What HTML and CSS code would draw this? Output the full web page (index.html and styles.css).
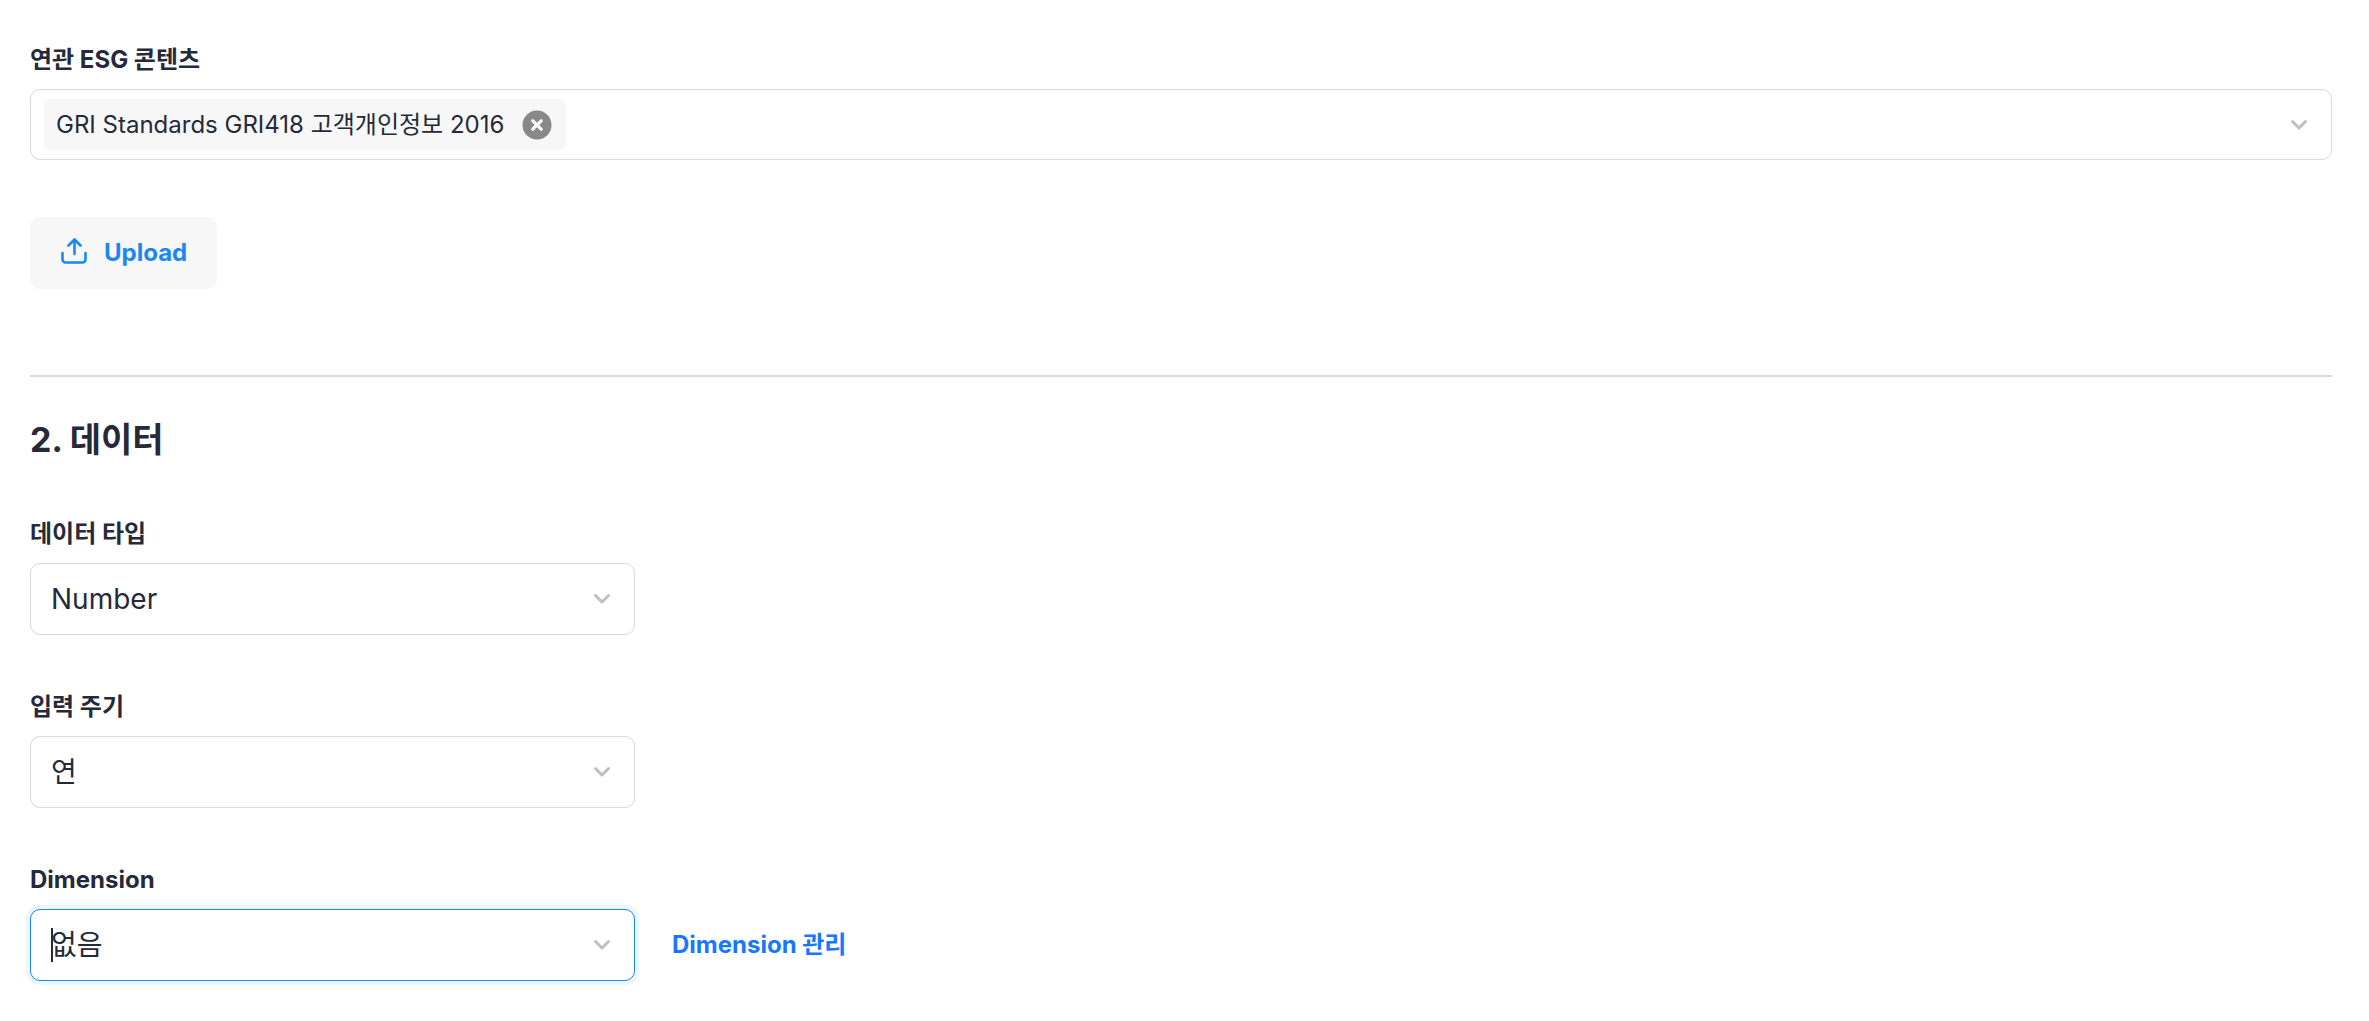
FILE: index.html
```
<!DOCTYPE html>
<html lang="ko">
<head>
    <meta charset="UTF-8">
    <meta name="viewport" content="width=device-width, initial-scale=1.0">
    <title>데이터</title>
    <link rel="stylesheet" href="styles.css">
</head>
<body>
    <form class="form">
        <section class="section">
            <div class="field">
                <label class="label" for="contents">연관 ESG 콘텐츠</label>
                <div class="multi-select">
                    <span class="tag">
                        GRI Standards GRI418 고객개인정보 2016
                        <button type="button" class="tag-remove" aria-label="삭제">
                            <svg viewBox="0 0 30 30" width="30" height="30">
                                <circle cx="15" cy="15" r="14.5" fill="#888" />
                                <path d="M10.8 10.8l8.4 8.4M19.2 10.8l-8.4 8.4" stroke="#fff" stroke-width="3.2" stroke-linecap="round" />
                            </svg>
                        </button>
                    </span>
                    <input type="text" id="contents" class="multi-input">
                    <svg class="chevron" viewBox="0 0 18 12" width="18" height="12">
                        <path d="M2.5 2.5L9 9l6.5-6.5" />
                    </svg>
                </div>
            </div>
            <button type="button" class="upload">
                <svg viewBox="0 0 28 28" width="28" height="28">
                    <path d="M2.5 16v6.5a3 3 0 0 0 3 3h17a3 3 0 0 0 3-3V16M14.5 17V3M8.5 8.5l6-6 6 6" />
                </svg>
                Upload
            </button>
        </section>

        <hr class="divider">

        <h2 class="title">2. 데이터</h2>

        <div class="field">
            <label class="label" for="dataType">데이터 타입</label>
            <div class="select-box">
                <select id="dataType" class="select">
                    <option>Number</option>
                </select>
                <svg class="chevron" viewBox="0 0 18 12" width="18" height="12">
                    <path d="M2.5 2.5L9 9l6.5-6.5" />
                </svg>
            </div>
        </div>

        <div class="field">
            <label class="label" for="period">입력 주기</label>
            <div class="select-box">
                <select id="period" class="select">
                    <option>연</option>
                </select>
                <svg class="chevron" viewBox="0 0 18 12" width="18" height="12">
                    <path d="M2.5 2.5L9 9l6.5-6.5" />
                </svg>
            </div>
        </div>

        <div class="field">
            <label class="label" for="dimension">Dimension</label>
            <div class="field-row">
                <div class="select-box">
                    <select id="dimension" class="select active">
                        <option>없음</option>
                    </select>
                    <span class="caret"></span>
                    <svg class="chevron" viewBox="0 0 18 12" width="18" height="12">
                        <path d="M2.5 2.5L9 9l6.5-6.5" />
                    </svg>
                </div>
                <a href="#" class="link">Dimension 관리</a>
            </div>
        </div>
    </form>
</body>
</html>
```

FILE: styles.css
```
* {
    box-sizing: border-box;
}
body {
    margin: 0;
    background-color: #fff;
    color: #252a3a;
    font-family: "Inter", "Noto Sans CJK KR", sans-serif;
    font-size: 24px;
}
button, input, select {
    font: inherit;
    color: inherit;
}
.form {
    display: flex;
    flex-direction: column;
    gap: 53px;
    padding: 41px 37px 40px 30px;
}
.section {
    display: flex;
    flex-direction: column;
    align-items: flex-start;
    gap: 57px;
}
.section .field {
    width: 100%;
}
.field {
    display: flex;
    flex-direction: column;
    gap: 10px;
}
.label {
    line-height: 38px;
    font-weight: 700;
}
.multi-select {
    display: flex;
    align-items: center;
    padding: 9px 23px 9px 13px;
    border: 1px solid #d9d9d9;
    border-radius: 10px;
}
.tag {
    display: flex;
    align-items: center;
    gap: 18px;
    padding: 0 14px 0 12px;
    line-height: 51px;
    border-radius: 6px;
    background-color: #f7f7f7;
}
.tag-remove {
    display: flex;
    padding: 0;
    border: none;
    background: none;
    cursor: pointer;
}
.multi-input {
    flex: 1;
    min-width: 0;
    height: 40px;
    border: none;
    outline: none;
    background: none;
}
.chevron {
    fill: none;
    stroke: #bfbfbf;
    stroke-width: 3;
    stroke-linecap: round;
    stroke-linejoin: round;
}
.upload {
    display: flex;
    align-items: center;
    gap: 16px;
    height: 72px;
    padding: 0 30px 2px;
    border: none;
    border-radius: 10px;
    background-color: #f7f7f7;
    color: #1b87f3;
    font-weight: 700;
    cursor: pointer;
}
.upload svg {
    margin-bottom: 2px;
    fill: none;
    stroke: currentColor;
    stroke-width: 2.6;
    stroke-linecap: round;
    stroke-linejoin: round;
}
.divider {
    width: 100%;
    height: 2px;
    margin: 33px 0 -12px;
    border: none;
    background-color: #d9dbe0;
}
.title {
    margin: 0;
    font-size: 34px;
    font-weight: 700;
    line-height: 44px;
}
.select-box {
    position: relative;
    width: 605px;
    max-width: 100%;
}
.select {
    display: block;
    width: 100%;
    height: 72px;
    padding: 0 60px 0 20px;
    border: 1px solid #d9d9d9;
    border-radius: 10px;
    background-color: #fff;
    font-size: 28px;
    outline: none;
    appearance: none;
}
.select.active {
    border-color: #1b87f3;
    box-shadow: 0 0 0 4px #ebf7ff;
}
/* icon sits over the right end of the select */
.select-box .chevron {
    position: absolute;
    top: 30px;
    right: 24px;
    pointer-events: none;
}
.caret {
    position: absolute;
    top: 19px;
    left: 21px;
    width: 2px;
    height: 34px;
    background-color: #252a3a;
}
.field-row {
    display: flex;
    align-items: center;
    gap: 37px;
}
.link {
    color: #1677ff;
    font-weight: 700;
    line-height: 36px;
    text-decoration: none;
}
```
